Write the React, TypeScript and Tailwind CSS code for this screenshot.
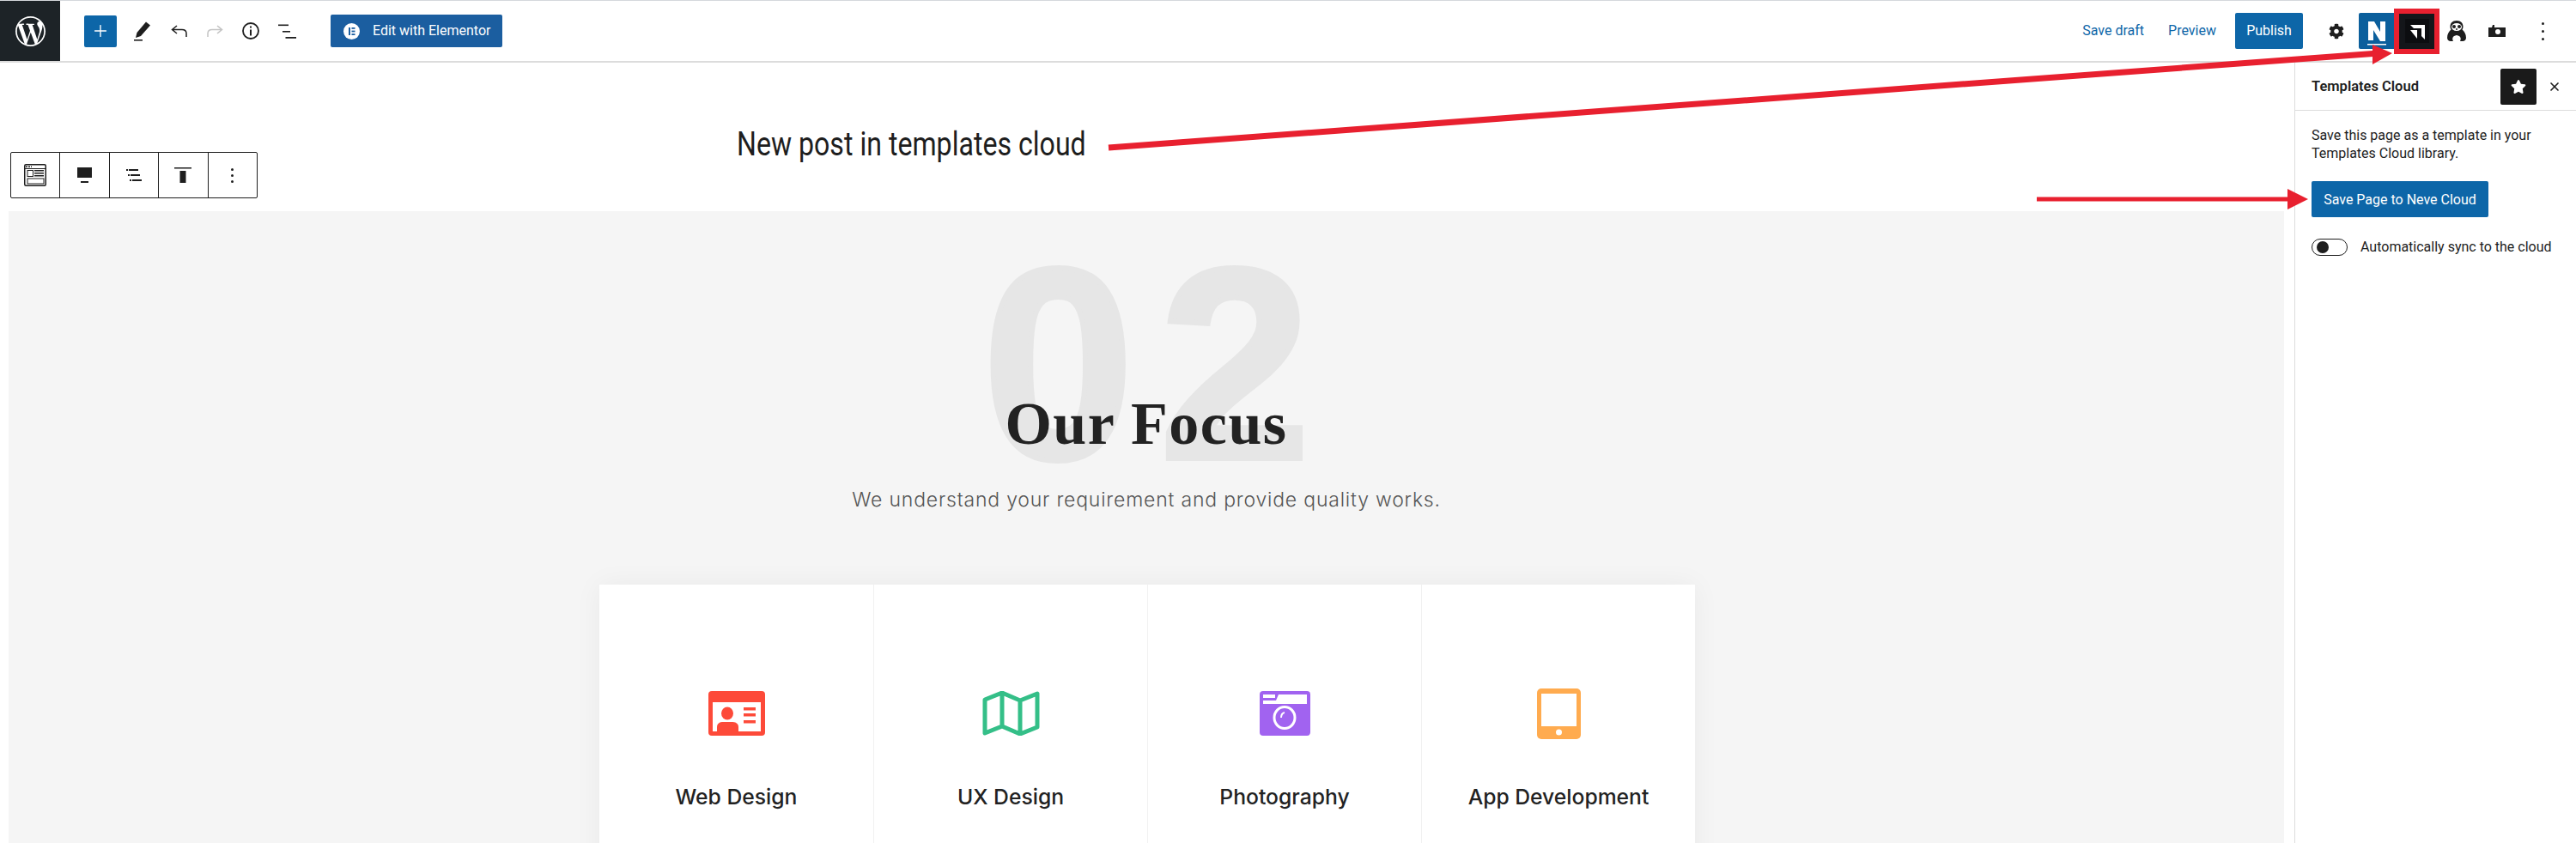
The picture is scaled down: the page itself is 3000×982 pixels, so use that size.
import React from "react";
import { SiWordpress } from "react-icons/si";
import { FaCog, FaStar } from "react-icons/fa";
import { X, Plus } from "lucide-react";

const sans = "font-['Roboto','Liberation_Sans',sans-serif]";
const poppins = "font-['Inter','Liberation_Sans',sans-serif]";

function Pencil() {
  return (
    <svg width="20" height="24" viewBox="0 0 20 24">
      <path d="M3.5 14 L14 1.5 L19 5.5 L8 18 L2 20 Z" fill="#1e1e1e" />
      <rect x="0" y="22" width="10" height="1.6" fill="#1e1e1e" />
    </svg>
  );
}
function Undo({ color = "#1e1e1e", flip = false }: { color?: string; flip?: boolean }) {
  return (
    <svg width="19" height="14" viewBox="0 0 19 14" style={flip ? { transform: "scaleX(-1)" } : undefined}>
      <path d="M7 1 L1.5 5.5 L7 10 M1.5 5.5 H13 Q18 5.5 18 10 V14" fill="none" stroke={color} strokeWidth="1.5" />
    </svg>
  );
}
function Info() {
  return (
    <svg width="20" height="20" viewBox="0 0 20 20">
      <circle cx="10" cy="10" r="9" fill="none" stroke="#1e1e1e" strokeWidth="1.8" />
      <rect x="9" y="8.5" width="2" height="7" fill="#1e1e1e" />
      <rect x="9" y="4.5" width="2" height="2" fill="#1e1e1e" />
    </svg>
  );
}
function ListView() {
  return (
    <svg width="21" height="17" viewBox="0 0 21 17">
      <rect x="0" y="0.5" width="12" height="1.6" fill="#1e1e1e" />
      <rect x="5" y="8" width="9" height="1.6" fill="#1e1e1e" />
      <rect x="8.5" y="15" width="12.5" height="1.8" fill="#1e1e1e" />
    </svg>
  );
}
function BlockIcon() {
  return (
    <svg width="26" height="26" viewBox="0 0 26 26">
      <rect x="0.75" y="0.75" width="24.5" height="24.5" rx="1.5" fill="none" stroke="#1e1e1e" strokeWidth="1.5" />
      <rect x="2" y="2.5" width="2" height="1.5" fill="#1e1e1e" />
      <rect x="5" y="2.5" width="2" height="1.5" fill="#1e1e1e" />
      <rect x="8" y="2.5" width="1" height="1.5" fill="#1e1e1e" />
      <rect x="1" y="5" width="24" height="1" fill="#1e1e1e" />
      <rect x="4" y="7.5" width="6.5" height="7" fill="none" stroke="#1e1e1e" strokeWidth="1" />
      <rect x="12" y="7" width="11" height="1.5" fill="#1e1e1e" />
      <rect x="12" y="10" width="11" height="1.5" fill="#1e1e1e" />
      <rect x="12" y="13" width="11" height="1.5" fill="#1e1e1e" />
      <rect x="4" y="17" width="19" height="6" fill="none" stroke="#1e1e1e" strokeWidth="1" />
    </svg>
  );
}
function AlignWide() {
  return (
    <svg width="17" height="18" viewBox="0 0 17 18">
      <rect x="0" y="0" width="17" height="12" fill="#1e1e1e" />
      <rect x="4" y="16" width="9" height="2" fill="#1e1e1e" />
    </svg>
  );
}
function JustifyIcon() {
  return (
    <svg width="18" height="16" viewBox="0 0 18 16">
      <rect x="0" y="1" width="2" height="2" fill="#1e1e1e" /><rect x="3" y="1" width="11" height="2" fill="#1e1e1e" />
      <rect x="2" y="7" width="2" height="2" fill="#1e1e1e" /><rect x="5" y="7" width="11" height="2" fill="#1e1e1e" />
      <rect x="4" y="13" width="2" height="2" fill="#1e1e1e" /><rect x="7" y="13" width="11" height="2" fill="#1e1e1e" />
    </svg>
  );
}
function AlignTop() {
  return (
    <svg width="20" height="18" viewBox="0 0 20 18">
      <rect x="0" y="0" width="20" height="1.5" fill="#1e1e1e" />
      <rect x="6.5" y="4" width="7" height="14" fill="#1e1e1e" />
    </svg>
  );
}
function Dots({ gap = "gap-[6px]", size = "size-[3px]" }: { gap?: string; size?: string }) {
  return (
    <div className={`flex flex-col items-center ${gap}`}>
      <span className={`${size} bg-[#1e1e1e] rounded-full`} />
      <span className={`${size} bg-[#1e1e1e] rounded-full`} />
      <span className={`${size} bg-[#1e1e1e] rounded-full`} />
    </div>
  );
}
function NeveLogo() {
  return (
    <svg width="22" height="30" viewBox="0 0 22 30">
      <path d="M1 1 H8 L15 13 V1 H21 V24 H15 L7 11 V23 H1 Z" fill="#fff" />
      <rect x="0" y="27" width="22" height="1.5" fill="#fff" />
    </svg>
  );
}
function CloudLogo() {
  return (
    <svg width="28" height="28" viewBox="0 0 28 28" className="bg-[#0c0d10]">
      <path d="M6 7 H23 V24 L19 20 V11 H10 Z" fill="#fff" />
      <path d="M6 13 H14 V23 Z" fill="#fff" />
    </svg>
  );
}
function Penguin() {
  return (
    <svg width="22" height="24" viewBox="0 0 22 24">
      <path d="M11 0 C6 0 3.5 3 3.5 7 C3.5 8.5 4 9.5 4.5 10.5 C2 12.5 0 16 0 20 C0 22.5 2 24 4 24 L7 24 C5.5 21 6 18 11 17 C16 18 16.5 21 15 24 L18 24 C20 24 22 22.5 22 20 C22 16 20 12.5 17.5 10.5 C18 9.5 18.5 8.5 18.5 7 C18.5 3 16 0 11 0 Z" fill="#1e1e1e" />
      <ellipse cx="11" cy="7.5" rx="6" ry="4.5" fill="#fff" />
      <circle cx="8" cy="7" r="2" fill="#1e1e1e" />
      <circle cx="14" cy="7" r="2" fill="#1e1e1e" />
      <circle cx="11" cy="10" r="1" fill="#1e1e1e" />
    </svg>
  );
}
function Camera() {
  return (
    <svg width="20" height="14" viewBox="0 0 20 14">
      <path d="M0 3 H4 L5 0 H7 V3 H20 V14 H0 Z M11 5 A3 3 0 1 0 11.01 11 A3 3 0 1 0 11 5 Z" fill="#1e1e1e" fillRule="evenodd" />
    </svg>
  );
}
function ElementorMark() {
  return (
    <svg width="19" height="19" viewBox="0 0 19 19">
      <circle cx="9.5" cy="9.5" r="9.5" fill="#fff" />
      <rect x="6" y="5" width="2" height="9" fill="#1b5ea0" />
      <rect x="9.5" y="5" width="4" height="1.8" fill="#1b5ea0" />
      <rect x="9.5" y="8.6" width="4" height="1.8" fill="#1b5ea0" />
      <rect x="9.5" y="12.2" width="4" height="1.8" fill="#1b5ea0" />
    </svg>
  );
}
function IdIcon() {
  return (
    <svg width="66" height="52" viewBox="0 0 66 52">
      <rect width="66" height="52" rx="4" fill="#fd4a39" />
      <rect x="5" y="13" width="56" height="34" fill="#fff" />
      <ellipse cx="22" cy="26" rx="7" ry="7.5" fill="#fd4a39" />
      <path d="M10 47 V42 C10 37 14 36 17 36 H27 C31 36 35 37 35 42 V47 Z" fill="#fd4a39" />
      <rect x="41" y="19" width="14" height="3.5" fill="#fd4a39" />
      <rect x="41" y="26" width="14" height="3.5" fill="#fd4a39" />
      <rect x="41" y="34" width="14" height="3.5" fill="#fd4a39" />
    </svg>
  );
}
function MapIcon() {
  return (
    <svg width="67" height="52" viewBox="0 0 67 52">
      <path d="M3 10 L23 2 L44 11 L64 3 V42 L44 50 L23 41 L3 49 Z M23 2 V41 M44 11 V50" fill="none" stroke="#34bf88" strokeWidth="5" strokeLinejoin="round" />
    </svg>
  );
}
function PhotoIcon() {
  return (
    <svg width="59" height="52" viewBox="0 0 59 52">
      <rect width="59" height="52" rx="4" fill="#a163f0" />
      <rect x="4" y="4" width="14" height="4" fill="#fff" />
      <path d="M4 11 H19 L22 4 H55 V15 H4 Z" fill="#fff" />
      <ellipse cx="29" cy="31" rx="12" ry="12.5" fill="none" stroke="#fff" strokeWidth="3" />
      <path d="M25 31 Q25 26 29 25" fill="none" stroke="#fff" strokeWidth="2" />
    </svg>
  );
}
function TabletIcon() {
  return (
    <svg width="51" height="59" viewBox="0 0 51 59">
      <rect width="51" height="59" rx="5" fill="#ffab4f" />
      <rect x="5" y="6" width="41" height="38" fill="#fff" />
      <ellipse cx="25.5" cy="51" rx="3.5" ry="3.5" fill="#fff" />
    </svg>
  );
}

function Card({ icon, title, border }: { icon: React.ReactNode; title: string; border?: boolean }) {
  return (
    <div className={`flex flex-col items-center ${border ? "border-l border-[#f1f1f1]" : ""}`}>
      <div className="h-[60px] mt-[120px] flex items-center justify-center">{icon}</div>
      <div className={`${poppins} mt-[49px] text-[24.7px] leading-[36px] font-medium text-[#222]`}>{title}</div>
    </div>
  );
}

export default function App() {
  return (
    <div className={`relative w-[3000px] h-[982px] overflow-hidden bg-white ${sans}`}>
      <header className="flex items-stretch h-[73px] border-t border-b-2 border-t-[#d5d8dc] border-b-[#dcdcdc] bg-white">
        <div className="w-[70px] bg-[#1d2327] flex items-center justify-center">
          <SiWordpress size={35} color="#fff" />
        </div>
        <div className="flex items-center pl-[28px] flex-1">
          <div className="w-[38px] h-[37px] bg-[#0d66a8] rounded-[2px] flex items-center justify-center">
            <Plus size={22} color="#fff" strokeWidth={1.5} />
          </div>
          <div className="w-[42px] flex justify-center ml-[9px]"><Pencil /></div>
          <div className="w-[42px] flex justify-center"><Undo /></div>
          <div className="w-[42px] flex justify-center"><Undo color="#c4c4c4" flip /></div>
          <div className="w-[42px] flex justify-center"><Info /></div>
          <div className="w-[42px] flex justify-center"><ListView /></div>
          <div className="ml-[30px] w-[200px] h-[38px] bg-[#1b5ea0] rounded-[2px] flex items-center pl-[15px] gap-[15px] text-white text-[16px]">
            <ElementorMark />
            <span>Edit with Elementor</span>
          </div>
          <div className="flex-1" />
          <span className="text-[16px] text-[#0d66a8]">Save draft</span>
          <span className="text-[16px] text-[#0d66a8] ml-[28px]">Preview</span>
          <div className="ml-[22px] w-[79px] h-[42px] bg-[#0d66a8] rounded-[2px] text-white text-[16px] flex items-center justify-center">Publish</div>
          <div className="ml-[30px] w-[18px] flex justify-center"><FaCog size={19} color="#1e1e1e" /></div>
          <div className="ml-[17px] w-[41px] h-[42px] bg-[#0b5f9c] rounded-l-[2px] flex items-center justify-center pt-[6px]"><NeveLogo /></div>
          <div className="w-[53px] h-[53px] border-[6px] border-[#e8202f] bg-[#14161a] flex items-center justify-center"><CloudLogo /></div>
          <div className="ml-[8px] w-[24px] flex justify-center"><Penguin /></div>
          <div className="ml-[25px] w-[20px] flex justify-center"><Camera /></div>
          <div className="ml-[42px] mr-[37px]"><Dots /></div>
        </div>
      </header>

      <div className="flex h-[909px]">
        <main className="flex-1 min-w-0 relative">
          <div className="pl-[12px] pt-[104px]">
            <div className="flex w-[288px] h-[54px] border border-[#1e1e1e] rounded-[2px] divide-x divide-[#1e1e1e]">
              <div className="flex-1 flex items-center justify-center"><BlockIcon /></div>
              <div className="flex-1 flex items-center justify-center"><AlignWide /></div>
              <div className="flex-1 flex items-center justify-center"><JustifyIcon /></div>
              <div className="flex-1 flex items-center justify-center"><AlignTop /></div>
              <div className="flex-1 flex items-center justify-center"><Dots gap="gap-[4px]" /></div>
            </div>
          </div>
          <section className="relative ml-[10px] mr-[12px] mt-[15px] h-[800px] bg-[#f5f5f5] flex flex-col items-center overflow-hidden">
            <div className="absolute left-[1134px] top-[8px] text-[318px] leading-[340px] font-bold text-[#e6e6e6] tracking-[29px] font-['Liberation_Sans',sans-serif] [-webkit-text-stroke:6px_#e6e6e6]">02</div>
            <h2 className="relative mt-[212px] text-[70px] leading-[72px] tracking-[1.5px] font-bold text-[#222] font-['Liberation_Serif',serif]">Our Focus</h2>
            <p className={`relative mt-[34px] text-[23px] leading-[36px] font-light tracking-[0.8px] text-[#555] ${poppins}`}>We understand your requirement and provide quality works.</p>
            <div className="relative ml-[2px] mt-[81px] w-[1276px] h-[400px] bg-white grid grid-cols-4 shadow-[0_0_30px_rgba(0,0,0,0.05)]">
              <Card icon={<IdIcon />} title="Web Design" />
              <Card icon={<MapIcon />} title="UX Design" border />
              <Card icon={<PhotoIcon />} title="Photography" border />
              <Card icon={<TabletIcon />} title="App Development" border />
            </div>
          </section>
        </main>
        <aside className="w-[328px] border-l border-[#ddd] bg-white">
          <div className="h-[56px] flex items-center pl-[19px] pt-[2px] border-b border-[#ddd]">
            <span className="text-[16.5px] font-semibold text-[#1e1e1e]">Templates Cloud</span>
          </div>
          <div className="pl-[19px] pt-[18px] text-[16px] leading-[21px] text-[#1e1e1e]">
            <p>Save this page as a template in your<br />Templates Cloud library.</p>
            <div className="mt-[22px] w-[206px] h-[42px] bg-[#0d66a8] rounded-[2px] flex items-center justify-center text-white text-[16px]">Save Page to Neve Cloud</div>
            <div className="mt-[24px] flex items-center gap-[15px]">
              <div className="w-[42px] h-[20px] rounded-full border border-[#1e1e1e] relative">
                <span className="absolute left-[5px] top-[2px] size-[14px] rounded-full bg-[#1e1e1e]" />
              </div>
              <span>Automatically sync to the cloud</span>
            </div>
          </div>
        </aside>
      </div>

      <div className="absolute left-[2912px] top-[80px] w-[42px] h-[42px] bg-[#1a1a1a] rounded-[2px] flex items-center justify-center"><FaStar size={18} color="#fff" /></div>
      <div className="absolute left-[2967px] top-[93px]"><X size={16} color="#1e1e1e" strokeWidth={2.5} /></div>

      <div className="absolute left-[858px] top-[146px] text-[38px] leading-[44px] whitespace-nowrap scale-x-[0.845] origin-left text-[#1e1e1e] font-['Roboto',sans-serif]">New post in templates cloud</div>

      <svg className="absolute left-0 top-0 pointer-events-none" width="3000" height="982">
        <line x1="1291" y1="172" x2="2770" y2="62" stroke="#e8202f" strokeWidth="7" />
        <polygon points="2763,52 2786,62 2763,75" fill="#e8202f" />
        <line x1="2372" y1="232" x2="2668" y2="232" stroke="#e8202f" strokeWidth="5" />
        <polygon points="2664,220 2688,232 2664,244" fill="#e8202f" />
      </svg>
    </div>
  );
}
